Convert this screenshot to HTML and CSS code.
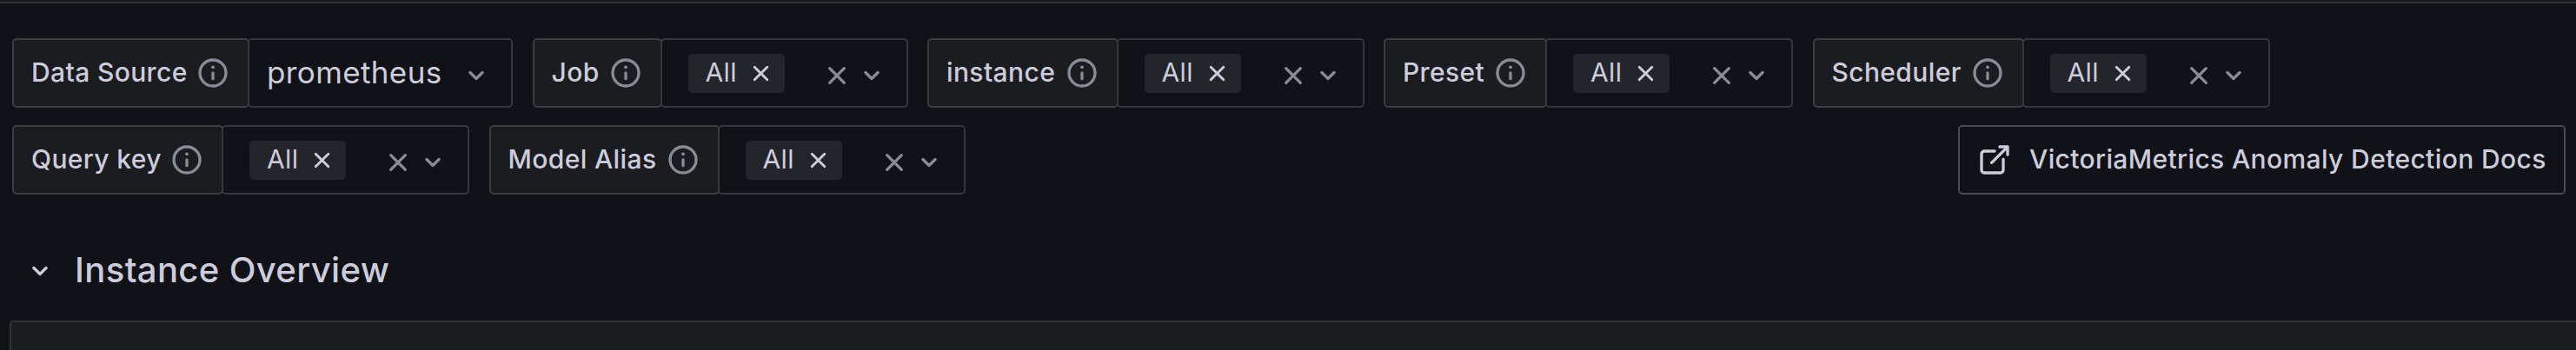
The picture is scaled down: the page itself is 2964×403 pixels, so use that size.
FILE: index.html
```
<!DOCTYPE html>
<html lang="en">
<head>
<meta charset="utf-8">
<title>Dashboard</title>
<link rel="stylesheet" href="styles.css">
</head>
<body>
<svg class="sprite" aria-hidden="true">
  <symbol id="info" viewBox="0 0 24 24"><circle cx="12" cy="12" r="9" fill="none" stroke="currentColor" stroke-width="2"/><path d="M12 12v4" stroke="currentColor" stroke-width="2" stroke-linecap="round"/><circle cx="12" cy="8" r="1.15" fill="currentColor"/></symbol>
  <symbol id="times" viewBox="0 0 24 24"><path d="M7 7l10 10M17 7L7 17" fill="none" stroke="currentColor" stroke-width="2" stroke-linecap="round"/></symbol>
  <symbol id="angle" viewBox="0 0 24 24"><path d="M7.75 9.9L12 14.1l4.25-4.2" fill="none" stroke="currentColor" stroke-width="2" stroke-linecap="round" stroke-linejoin="round"/></symbol>
  <symbol id="external" viewBox="0 0 24 24"><path d="M12 6H5a2 2 0 0 0-2 2v11a2 2 0 0 0 2 2h11a2 2 0 0 0 2-2v-7.400M15.500 3H21v5.500M20.500 3.500L10 14" fill="none" stroke="currentColor" stroke-width="2" stroke-linecap="round" stroke-linejoin="round"/></symbol>
</svg>
<main class="page">
  <div class="topbar"></div>
  <div class="controls">
    <div class="row">
      <div class="variable"><label class="label w-source"><span class="text">Data Source</span><svg class="icon"><use href="#info"/></svg></label><div class="select single"><span class="text">prometheus</span><svg class="icon"><use href="#angle"/></svg></div></div>
      <div class="variable"><label class="label w-job"><span class="text">Job</span><svg class="icon"><use href="#info"/></svg></label><div class="select"><span class="chip"><span class="text">All</span><svg class="icon small"><use href="#times"/></svg></span><svg class="icon clear"><use href="#times"/></svg><svg class="icon"><use href="#angle"/></svg></div></div>
      <div class="variable"><label class="label w-instance"><span class="text">instance</span><svg class="icon"><use href="#info"/></svg></label><div class="select"><span class="chip"><span class="text">All</span><svg class="icon small"><use href="#times"/></svg></span><svg class="icon clear"><use href="#times"/></svg><svg class="icon"><use href="#angle"/></svg></div></div>
      <div class="variable"><label class="label w-preset"><span class="text">Preset</span><svg class="icon"><use href="#info"/></svg></label><div class="select"><span class="chip"><span class="text">All</span><svg class="icon small"><use href="#times"/></svg></span><svg class="icon clear"><use href="#times"/></svg><svg class="icon"><use href="#angle"/></svg></div></div>
      <div class="variable"><label class="label w-scheduler"><span class="text">Scheduler</span><svg class="icon"><use href="#info"/></svg></label><div class="select"><span class="chip"><span class="text">All</span><svg class="icon small"><use href="#times"/></svg></span><svg class="icon clear"><use href="#times"/></svg><svg class="icon"><use href="#angle"/></svg></div></div>
    </div>
    <div class="row">
      <div class="variable"><label class="label w-query"><span class="text">Query key</span><svg class="icon"><use href="#info"/></svg></label><div class="select"><span class="chip"><span class="text">All</span><svg class="icon small"><use href="#times"/></svg></span><svg class="icon clear"><use href="#times"/></svg><svg class="icon"><use href="#angle"/></svg></div></div>
      <div class="variable"><label class="label w-model"><span class="text">Model Alias</span><svg class="icon"><use href="#info"/></svg></label><div class="select"><span class="chip"><span class="text">All</span><svg class="icon small"><use href="#times"/></svg></span><svg class="icon clear"><use href="#times"/></svg><svg class="icon"><use href="#angle"/></svg></div></div>
      <a class="docs"><svg class="icon"><use href="#external"/></svg><span class="text">VictoriaMetrics Anomaly Detection Docs</span></a>
    </div>
  </div>
  <h2 class="section"><svg class="icon"><use href="#angle"/></svg><span>Instance Overview</span></h2>
  <section class="panel"></section>
</main>
</body>
</html>
```
FILE: styles.css
```
* { box-sizing: border-box; }
html { height: 403px; overflow: hidden; background: #111217; }
body {
  margin: 0;
  height: 403px;
  overflow: hidden;
  color: #ccccdc;
  font: 500 30px/40px Inter, sans-serif;
  letter-spacing: 0.375px;
}
.sprite { display: none; }
.page { display: flex; flex-direction: column; height: 403px; overflow: hidden; }
.topbar { flex: none; height: 4px; background: #1b1c20; border-bottom: 2px solid #313237; }
.controls { display: flex; flex-direction: column; flex: none; gap: 20px; padding: 40px 12px 0 14px; }
.row { display: flex; gap: 22.5px; }
.variable { display: flex; height: 80px; flex: none; }
.icon { width: 40px; height: 40px; flex: none; display: block; }
.text { margin-top: -2px; }
.label {
  display: flex;
  align-items: center;
  justify-content: space-between;
  padding: 0 20px;
  background: #1b1c20;
  border: 2px solid #3c3d43;
  border-radius: 5px;
}
.label .icon, .select > .icon { color: #8b8b97; }
.w-source { width: 273px; }
.w-job { width: 149px; }
.w-instance { width: 219.5px; }
.w-preset { width: 188px; }
.w-scheduler { width: 243px; }
.w-query { width: 243px; }
.w-model { width: 265px; }
.select {
  display: flex;
  align-items: center;
  width: 285px;
  margin-left: -2px;
  padding: 0 20px 0 30px;
  border: 2px solid #36373d;
  border-radius: 5px;
  font-weight: 400;
}
.select > .icon { margin-top: 6px; }
.select .clear { margin-left: auto; }
.single { width: 305px; padding-left: 20px; justify-content: space-between; font-size: 35px; }
.chip {
  display: flex;
  align-items: center;
  gap: 10px;
  width: 111px;
  height: 45px;
  margin-top: 1px;
  padding: 0 10px 0 20px;
  justify-content: space-between;
  background: #24252b;
  border-radius: 5px;
}
.chip .text { margin-top: -3px; }
.small { width: 35px; height: 35px; }
.docs {
  display: flex;
  align-items: center;
  gap: 20px;
  width: 699px;
  height: 80px;
  margin-left: auto;
  padding: 0 20px;
  border: 2px solid #4a4b51;
  border-radius: 5px;
  white-space: nowrap;
}
.section {
  display: flex;
  align-items: center;
  flex: none;
  gap: 20px;
  height: 145px;
  margin: 0;
  padding: 28px 0 0 26px;
  font-size: 40px;
  font-weight: 500;
}
.section .icon { margin-top: 3px; }
.panel {
  flex: 1;
  margin-left: 11px;
  background: #1b1c20;
  border: 2px solid #313237;
  border-width: 2px 0 0 2px;
  border-top-left-radius: 5px;
}
```
